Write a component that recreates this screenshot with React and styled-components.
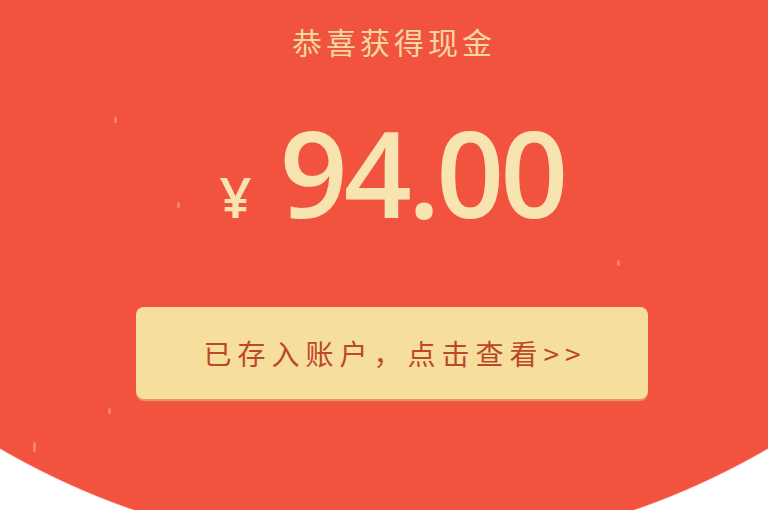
import styled, { createGlobalStyle } from "styled-components";

const Global = createGlobalStyle`
body {
  margin: 0;
  background: #ffffff;
}
`;

const Page = styled.div`
box-sizing: border-box;
width: 768px;
height: 510px;
padding-left: 16px;
overflow: hidden;
background: radial-gradient(circle 764px at 50% -211px, #f2533f 99.8%, #ffffff 100%);
display: flex;
flex-direction: column;
align-items: center;
position: relative;`;

const Title = styled.div`
padding-top: 23px;
font-family: "Noto Sans CJK SC", "Noto Sans", sans-serif;
font-size: 30px;
line-height: 36px;
letter-spacing: 4px;
color: #f4d8a2;
margin-left: 4px;`;

const Amount = styled.div`
margin-top: 54px;
display: flex;
align-items: baseline;
color: #f8e4b0;
font-family: "Open Sans", "Liberation Sans", sans-serif;
font-weight: 600;
line-height: 1;`;

const Yen = styled.span`
font-size: 56px;
margin-right: 28px;`;

const Number = styled.span`
font-size: 119px;
letter-spacing: -4px;`;

const Button = styled.button`
margin-top: 75px;
width: 512px;
height: 92px;
border: none;
border-radius: 8px;
background: #f6df9c;
box-shadow: 0 2px 0 #e2995d;
display: flex;
align-items: center;
justify-content: center;
font-family: "Noto Sans CJK SC", "Noto Sans", sans-serif;
font-size: 28px;
font-weight: 400;
letter-spacing: 6px;
color: #bc472a;
cursor: pointer;
padding: 0 0 0 6px;`;

const Spark = styled.span`
position: absolute;
width: ${p => p.w || 3}px;
height: ${p => p.h || 6}px;
border-radius: 2px;
background: rgba(255, 170, 150, 0.55);`;

export default function App() {
    return <>
        <Global />
        <Page>
            <Spark style={{ left: 114, top: 117 }} />
            <Spark style={{ left: 177, top: 202 }} />
            <Spark style={{ left: 617, top: 260 }} />
            <Spark style={{ left: 108, top: 408 }} />
            <Spark style={{ left: 33, top: 442 }} h={10} />
            <Title>恭喜获得现金</Title>
            <Amount>
                <Yen>¥</Yen>
                <Number>94.00</Number>
            </Amount>
            <Button>已存入账户，点击查看&gt;&gt;</Button>
        </Page>
    </>
}
